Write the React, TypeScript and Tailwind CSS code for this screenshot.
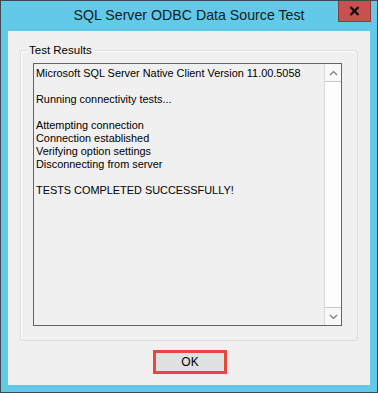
import React from "react";

const lines: string[] = [
  "Microsoft SQL Server Native Client Version 11.00.5058",
  "",
  "Running connectivity tests...",
  "",
  "Attempting connection",
  "Connection established",
  "Verifying option settings",
  "Disconnecting from server",
  "",
  "TESTS COMPLETED SUCCESSFULLY!",
];

export default function App() {
  return (
    <div
      className="w-[378px] h-[393px] bg-[#62c9e9] border border-[#3d4a50] flex flex-col relative"
      style={{ fontFamily: '"Liberation Sans", Arial, sans-serif' }}
    >
      <div className="h-[30px] flex items-center justify-center text-[14.2px] text-[#1b1b1b] pb-[1px]">
        SQL Server ODBC Data Source Test
      </div>
      <div className="absolute top-0 right-[6px] w-[33px] h-[21px] bg-[#c75050] border border-t-0 border-[#8e3a3a] flex items-center justify-center">
        <svg width="11" height="10" viewBox="0 0 11 10">
          <path d="M1.5 1 L9.5 9 M9.5 1 L1.5 9" stroke="#111" strokeWidth="2.4" />
        </svg>
      </div>
      <div className="mx-[7px] mb-[7px] flex-1 bg-[#f0f0f0] flex flex-col">
        <div className="mt-[19px] ml-[12px] w-[338px] h-[291px] relative border border-[#d5dfe5] rounded-[3px] shadow-[inset_1px_1px_0_#ffffff] pt-[12px] pl-[12px] pr-[15px] pb-[14px] flex">
          <div className="absolute -top-[8px] left-[6px] px-[2px] bg-[#f0f0f0] text-[11.5px] leading-[14px] text-black">
            Test Results
          </div>
          <div className="flex-1 border border-[#646464] flex bg-[#f0f0f0]">
            <div className="flex-1 pl-[2px] pt-[3px] text-[10.9px] leading-[13px] text-black">
              {lines.map((l, i) => (
                <div key={i} className="h-[13px] whitespace-pre">
                  {l || " "}
                </div>
              ))}
            </div>
            <div className="w-[17px] bg-[#fdfdfd] border-l border-[#dadada] flex flex-col justify-between">
              <div className="h-[18px] border-b border-[#c8c8c8] flex items-center justify-center bg-[#f8f8f8]">
                <svg width="9" height="6" viewBox="0 0 9 6">
                  <path d="M1 5 L4.5 1.5 L8 5" stroke="#7a7a7a" strokeWidth="1.2" fill="none" />
                </svg>
              </div>
              <div className="h-[18px] border-t border-[#c8c8c8] flex items-center justify-center bg-[#f8f8f8]">
                <svg width="9" height="6" viewBox="0 0 9 6">
                  <path d="M1 1 L4.5 4.5 L8 1" stroke="#7a7a7a" strokeWidth="1.2" fill="none" />
                </svg>
              </div>
            </div>
          </div>
        </div>
        <div className="flex justify-center mt-[9px] pl-[2px]">
          <div className="w-[74px] h-[24px] border-[3px] border-[#e8463f] bg-[#e1e1e1] flex items-center justify-center text-[12px] text-black">
            OK
          </div>
        </div>
      </div>
    </div>
  );
}
